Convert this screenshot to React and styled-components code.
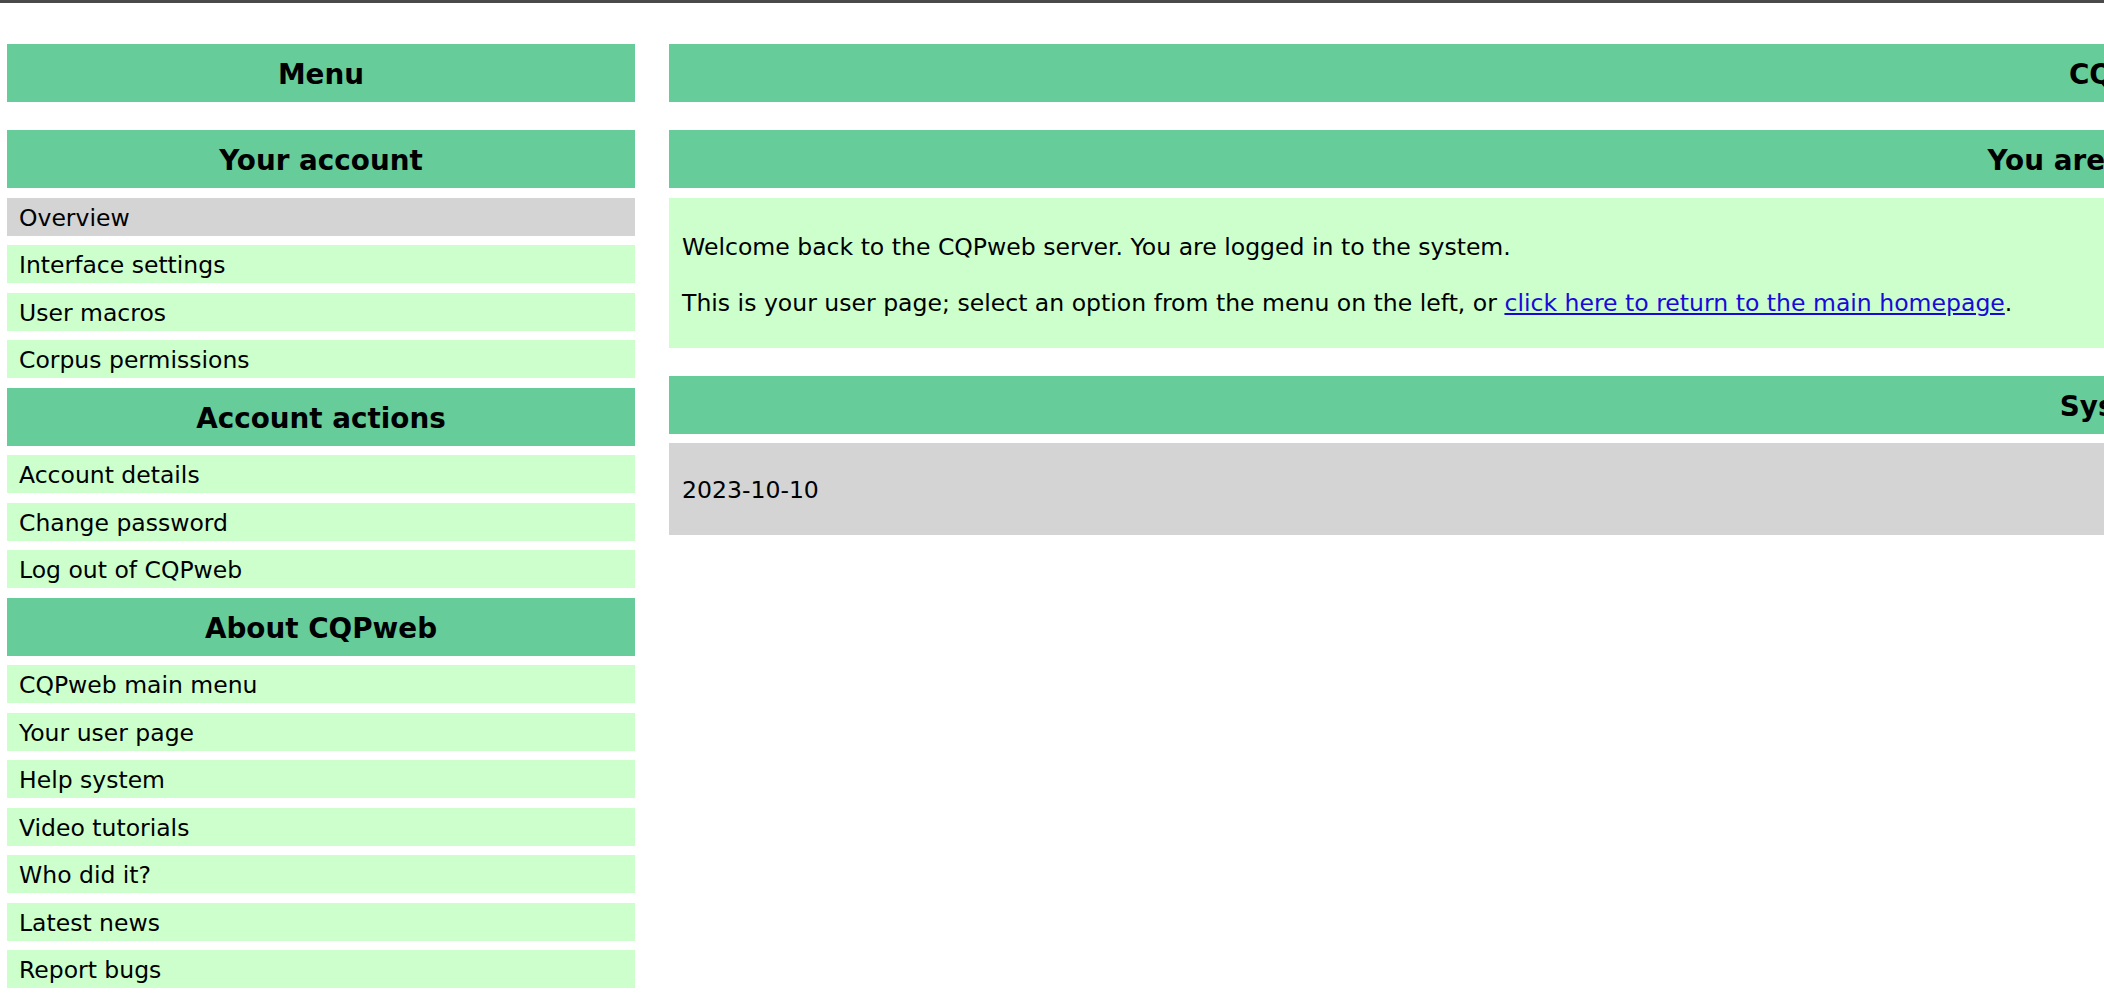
import React from "react";
import styled, { createGlobalStyle } from "styled-components";

const GlobalStyle = createGlobalStyle`
  html, body {
    margin: 0;
    padding: 0;
    overflow: hidden;
    background: #ffffff;
  }
  html {
    border-top: 3px solid #4a4a4a;
  }
  body {
    font-family: "DejaVu Sans", Verdana, sans-serif;
    color: #000000;
  }
`;

const Page = styled.div`
  display: flex;
  align-items: flex-start;
  gap: 34px;
  padding: 41px 0 0 7px;
  width: max-content;
`;

const Column = styled.div`
  display: flex;
  flex-direction: column;
  gap: 28px;
  width: ${(p) => p.$width}px;
  flex: none;
`;

const Block = styled.div`
  display: flex;
  flex-direction: column;
  gap: 9.5px;
`;

const Header = styled.div`
  height: 58px;
  box-sizing: border-box;
  padding-top: 3px;
  background: #66cc99;
  display: flex;
  align-items: center;
  justify-content: center;
  font-weight: bold;
  font-size: 27.8px;
  white-space: nowrap;
`;

const MenuItem = styled.a`
  height: 38px;
  box-sizing: border-box;
  padding: 2px 0 0 12px;
  display: flex;
  align-items: center;
  background: ${(p) => (p.$current ? "#d4d4d4" : "#ccffcc")};
  font-size: 23.5px;
  color: #000000;
  text-decoration: none;
  white-space: nowrap;
`;

const Panel = styled.div`
  background: ${(p) => (p.$tone === "grey" ? "#d4d4d4" : "#ccffcc")};
  height: ${(p) => p.$height}px;
  box-sizing: border-box;
  padding: ${(p) => p.$padTop}px 13px 0 13px;
  font-size: 23.55px;
`;

const Para = styled.p`
  margin: 0 0 31.5px 0;
  line-height: 25px;
  white-space: nowrap;
`;

const Stamp = styled.p`
  margin: 0;
  line-height: 95px;
  white-space: nowrap;
`;

const Link = styled.a`
  color: #1a0ad8;
  text-decoration: underline;
`;

const sections = [
  {
    title: "Your account",
    items: [
      { label: "Overview", current: true },
      { label: "Interface settings" },
      { label: "User macros" },
      { label: "Corpus permissions" },
    ],
  },
  {
    title: "Account actions",
    items: [
      { label: "Account details" },
      { label: "Change password" },
      { label: "Log out of CQPweb" },
    ],
  },
  {
    title: "About CQPweb",
    items: [
      { label: "CQPweb main menu" },
      { label: "Your user page" },
      { label: "Help system" },
      { label: "Video tutorials" },
      { label: "Who did it?" },
      { label: "Latest news" },
      { label: "Report bugs" },
    ],
  },
];

export default function App() {
  return (
    <>
      <GlobalStyle />
      <Page>
        <Column $width={628}>
          <Block>
            <Header>Menu</Header>
          </Block>
          <Block>
            {sections.map((s) => (
              <React.Fragment key={s.title}>
                <Header>{s.title}</Header>
                {s.items.map((it) => (
                  <MenuItem key={it.label} href="#" $current={it.current}>
                    {it.label}
                  </MenuItem>
                ))}
              </React.Fragment>
            ))}
          </Block>
        </Column>
        <Column $width={3062}>
          <Block>
            <Header>CQPweb account</Header>
          </Block>
          <Block>
            <Header>You are logged in as admin</Header>
            <Panel $height={150} $padTop={37}>
              <Para>Welcome back to the CQPweb server. You are logged in to the system.</Para>
              <Para>
                This is your user page; select an option from the menu on the left, or{" "}
                <Link href="#">click here to return to the main homepage</Link>.
              </Para>
            </Panel>
          </Block>
          <Block>
            <Header>System messages</Header>
            <Panel $tone="grey" $height={92} $padTop={0}>
              <Stamp>2023-10-10</Stamp>
            </Panel>
          </Block>
        </Column>
      </Page>
    </>
  );
}
